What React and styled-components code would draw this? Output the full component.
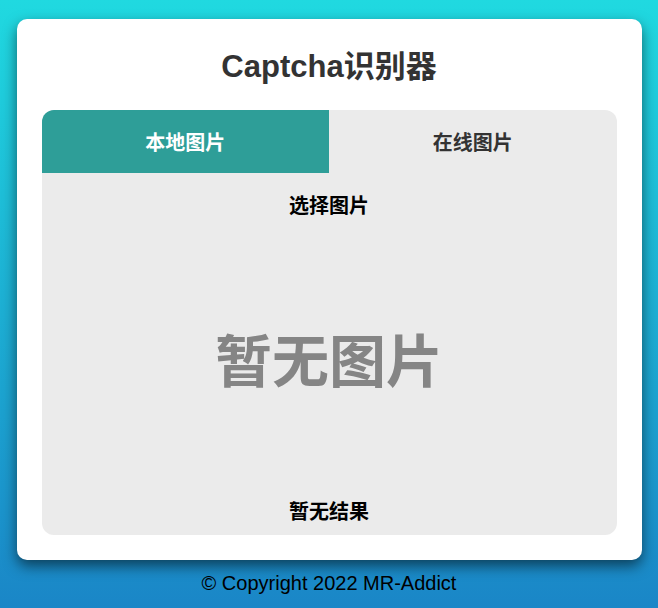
import React, { useState } from "react";
import styled, { createGlobalStyle } from "styled-components";

const GlobalStyle = createGlobalStyle`
  html, body {
    margin: 0;
    padding: 0;
  }
  body {
    min-height: 100vh;
    background: linear-gradient(180deg, #20d9e0 0%, #1a86c7 100%);
    font-family: "Liberation Sans", "Noto Sans CJK SC", sans-serif;
  }
`;

const Page = styled.div`
  display: flex;
  flex-direction: column;
  align-items: center;
  padding-top: 19px;
`;

const Card = styled.div`
  width: 575px;
  padding: 25px;
  background: #fff;
  border-radius: 10px;
  box-shadow: 0 6px 14px rgba(0, 0, 0, 0.55);
`;

const Title = styled.h1`
  margin: 0 0 20px;
  line-height: 46px;
  font-size: 31px;
  font-weight: bold;
  text-align: center;
  color: #333;
`;

const Panel = styled.div`
  background: #ebebeb;
  border-radius: 12px;
  overflow: hidden;
  display: flex;
  flex-direction: column;
`;

const Tabs = styled.div`
  display: grid;
  grid-template-columns: 1fr 1fr;
  height: 63px;
`;

const Tab = styled.button`
  border: none;
  margin: 0;
  padding: 0;
  font-family: inherit;
  font-size: 20px;
  font-weight: bold;
  cursor: pointer;
  background: ${(p) => (p.active ? "#2e9e98" : "transparent")};
  color: ${(p) => (p.active ? "#fff" : "#333")};
`;

const Row = styled.div`
  display: flex;
  align-items: center;
  justify-content: center;
  height: ${(p) => p.h}px;
  padding-bottom: 2px;
  box-sizing: border-box;
  font-size: 20px;
  font-weight: bold;
  color: #000;
`;

const Empty = styled.div`
  display: flex;
  align-items: center;
  justify-content: center;
  height: 250px;
  padding-bottom: 10px;
  box-sizing: border-box;
  font-size: 57px;
  font-weight: bold;
  color: #858585;
`;

const Footer = styled.div`
  line-height: 46px;
  font-size: 20px;
  color: #000;
`;

const App = () => {
  const [tab, setTab] = useState(0);

  return (
    <>
      <GlobalStyle />
      <Page>
        <Card>
          <Title>Captcha识别器</Title>
          <Panel>
            <Tabs>
              <Tab active={tab === 0} onClick={() => setTab(0)}>
                本地图片
              </Tab>
              <Tab active={tab === 1} onClick={() => setTab(1)}>
                在线图片
              </Tab>
            </Tabs>
            <Row h={64}>选择图片</Row>
            <Empty>暂无图片</Empty>
            <Row h={48}>暂无结果</Row>
          </Panel>
        </Card>
        <Footer>© Copyright 2022 MR-Addict</Footer>
      </Page>
    </>
  );
};

export default App;
